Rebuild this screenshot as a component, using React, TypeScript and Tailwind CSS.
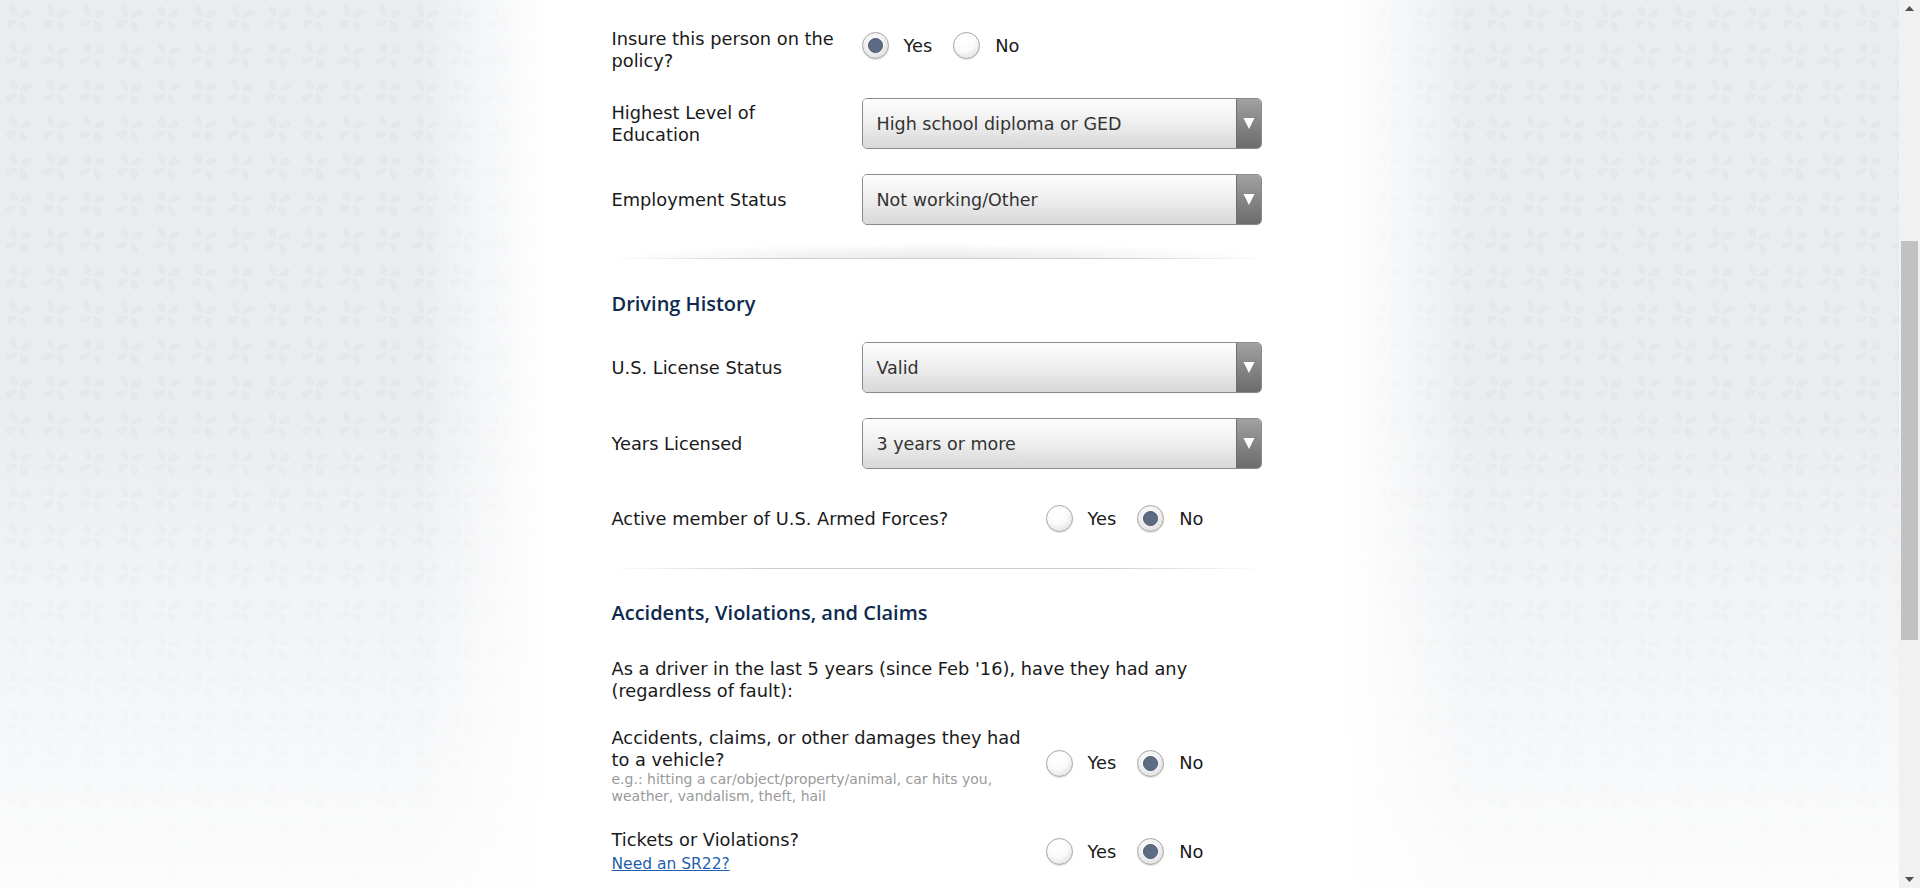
import React from "react";

const body = "font-['DejaVu_Sans',sans-serif]";

function Radio({ checked, label }: { checked?: boolean; label: string }) {
  return (
    <div className="flex items-center">
      {checked ? (
        <span className="w-[27px] h-[27px] rounded-full border border-[#a6a6a6] bg-[radial-gradient(circle_at_45%_35%,#ffffff_0%,#f1f1f1_45%,#d4d4d4_100%)] shadow-[0_1px_1px_rgba(0,0,0,0.12)] flex items-center justify-center">
          <span className="w-[15px] h-[15px] rounded-full bg-[#5d6b84] border border-[#49556c]" />
        </span>
      ) : (
        <span className="w-[27px] h-[27px] rounded-full border border-[#a6a6a6] bg-[radial-gradient(circle_at_40%_30%,#ffffff_0%,#fbfbfb_45%,#d8d8d8_100%)] shadow-[0_1px_1px_rgba(0,0,0,0.12)]" />
      )}
      <span className="ml-[15px] text-[#1a1a1a]">{label}</span>
    </div>
  );
}

function RadioGroup({ value }: { value: "yes" | "no" }) {
  return (
    <div className="flex items-center gap-[21px]">
      <Radio checked={value === "yes"} label="Yes" />
      <Radio checked={value === "no"} label="No" />
    </div>
  );
}

function Select({ value }: { value: string }) {
  return (
    <div className="w-[400px] h-[51px] flex rounded-[5px] border border-[#8a8a8a] overflow-hidden shadow-[0_1px_0_rgba(255,255,255,0.8)]">
      <div className="flex-1 flex items-center pl-[14px] bg-[linear-gradient(to_bottom,#fefefe_0%,#f0f0f0_45%,#d8d8d8_100%)] text-[#333333] text-[17.5px]">
        {value}
      </div>
      <div className="w-[25px] flex items-center justify-center border-l border-[#6e6e6e] bg-[linear-gradient(to_bottom,#a2a2a2_0%,#858585_50%,#6c6c6c_100%)]">
        <svg width="12" height="13" viewBox="0 0 12 13">
          <polygon points="0.5,1 11.5,1 6,12" fill="#ffffff" />
        </svg>
      </div>
    </div>
  );
}

function Separator({ strong }: { strong?: boolean }) {
  return (
    <div className="relative h-[16px] w-[656px] -ml-[2px]">
      {strong && (
        <div className="absolute inset-0 bg-[radial-gradient(ellipse_50%_100%_at_50%_100%,rgba(0,0,0,0.09),rgba(0,0,0,0)_100%)]" />
      )}
      <div className="absolute left-0 right-0 bottom-0 h-px bg-[linear-gradient(to_right,rgba(200,203,208,0),#c9ccd1_25%,#c9ccd1_75%,rgba(200,203,208,0))]" />
    </div>
  );
}

function Heading({ children }: { children: React.ReactNode }) {
  return (
    <h2 className="font-['Open_Sans',sans-serif] font-semibold text-[20px] leading-[26px] text-[#0e2a4e]">
      {children}
    </h2>
  );
}

function Background() {
  return (
    <div className="absolute inset-0 bg-[#eaedf0]">
      <svg className="absolute inset-0 w-full h-full" xmlns="http://www.w3.org/2000/svg">
        <defs>
          <pattern id="flor" width="37" height="37" patternUnits="userSpaceOnUse">
            <g transform="translate(18.5,18.5)" fill="#e5e8eb" stroke="#e2e5e9" strokeWidth="0.8">
              <path d="M2,-2 C4,-8 10,-10 12,-7 C14,-4 8,-1 2,-2Z" />
              <path d="M2,2 C8,4 10,10 7,12 C4,14 1,8 2,2Z" />
              <path d="M-2,2 C-4,8 -10,10 -12,7 C-14,4 -8,1 -2,2Z" />
              <path d="M-2,-2 C-8,-4 -10,-10 -7,-12 C-4,-14 -1,-8 -2,-2Z" />
            </g>
          </pattern>
        </defs>
        <rect width="100%" height="100%" fill="url(#flor)" />
      </svg>
      <div className="absolute inset-0 bg-[linear-gradient(to_right,rgba(255,255,255,0)_0px,rgba(255,255,255,0)_420px,#ffffff_545px,#ffffff_1345px,rgba(255,255,255,0)_1470px)]" />
      <div className="absolute inset-0 bg-[linear-gradient(to_bottom,rgba(255,255,255,0)_0%,rgba(255,255,255,0)_45%,rgba(255,255,255,0.85)_100%)]" />
    </div>
  );
}

function Scrollbar() {
  return (
    <div className="w-[21px] h-full bg-[#f1f1f1] flex flex-col items-center">
      <div className="h-[17px] w-full flex items-center justify-center">
        <svg width="9" height="5" viewBox="0 0 9 5">
          <polygon points="0,5 9,5 4.5,0" fill="#505050" />
        </svg>
      </div>
      <div className="h-[224px]" />
      <div className="w-[17px] h-[399px] bg-[#c1c1c1]" />
      <div className="flex-1" />
      <div className="h-[17px] w-full flex items-center justify-center">
        <svg width="9" height="5" viewBox="0 0 9 5">
          <polygon points="0,0 9,0 4.5,5" fill="#505050" />
        </svg>
      </div>
    </div>
  );
}

export default function App() {
  return (
    <div className={`w-full h-[888px] flex overflow-hidden ${body} text-[17.8px] leading-[22px] text-[#1a1a1a]`}>
      <div className="relative flex-1 h-full">
        <Background />
        <div className="relative mx-auto w-[676px] pt-[28px]">
          <div className="w-[650px] flex flex-col">
            <div className="flex items-start">
              <div className="w-[250px] pr-[22px]">Insure this person on the policy?</div>
              <div className="mt-[4px]">
                <RadioGroup value="yes" />
              </div>
            </div>

            <div className="flex items-center mt-[26px]">
              <div className="w-[250px] pr-[22px]">Highest Level of Education</div>
              <Select value="High school diploma or GED" />
            </div>

            <div className="flex items-center mt-[25px]">
              <div className="w-[250px] pr-[22px]">Employment Status</div>
              <Select value="Not working/Other" />
            </div>

            <div className="mt-[18px]">
              <Separator strong />
            </div>

            <div className="mt-[32px]">
              <Heading>Driving History</Heading>
            </div>

            <div className="flex items-center mt-[25px]">
              <div className="w-[250px] pr-[22px]">U.S. License Status</div>
              <Select value="Valid" />
            </div>

            <div className="flex items-center mt-[25px]">
              <div className="w-[250px] pr-[22px]">Years Licensed</div>
              <Select value="3 years or more" />
            </div>

            <div className="flex items-center mt-[36px]">
              <div className="w-[434px] pr-[10px]">Active member of U.S. Armed Forces?</div>
              <RadioGroup value="no" />
            </div>

            <div className="mt-[21px]">
              <Separator />
            </div>

            <div className="mt-[31px]">
              <Heading>Accidents, Violations, and Claims</Heading>
            </div>

            <div className="mt-[32px]">
              As a driver in the last 5 years (since Feb '16), have they had any (regardless of fault):
            </div>

            <div className="flex items-center mt-[25px]">
              <div className="w-[434px] pr-[12px]">
                <div>Accidents, claims, or other damages they had to a vehicle?</div>
                <div className="text-[14px] leading-[17px] text-[#9a9a9a]">
                  e.g.: hitting a car/object/property/animal, car hits you, weather, vandalism, theft, hail
                </div>
              </div>
              <div className="mb-[6px]">
                <RadioGroup value="no" />
              </div>
            </div>

            <div className="flex items-center mt-[24px]">
              <div className="w-[434px] pr-[12px]">
                <div>Tickets or Violations?</div>
                <a href="#" className="block mt-[3px] text-[15.5px] leading-[20px] text-[#1f5fae] underline">
                  Need an SR22?
                </a>
              </div>
              <RadioGroup value="no" />
            </div>
          </div>
        </div>
      </div>
      <Scrollbar />
    </div>
  );
}
